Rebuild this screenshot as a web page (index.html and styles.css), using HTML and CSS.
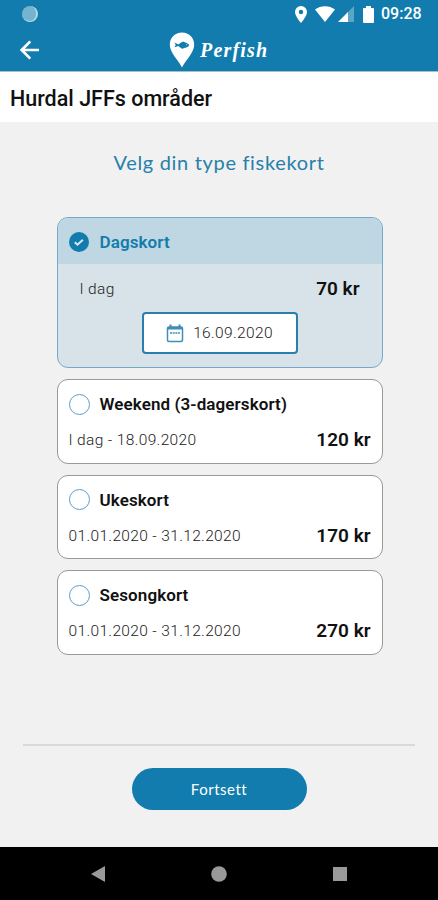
FILE: index.html
```html
<!DOCTYPE html>
<html lang="no">
<head>
    <meta charset="UTF-8">
    <meta name="viewport" content="width=device-width, initial-scale=1.0">
    <title>Perfish</title>
    <link rel="stylesheet" href="styles.css">
</head>
<body>

    <header class="header">
        <div class="status-bar">
            <span class="status-dot"></span>
            <div class="status-icons">
                <svg class="icon-pin" width="12" height="17" viewBox="0 0 12 17">
                    <path fill="#fff" fill-rule="evenodd" d="M6 0a6 6 0 0 0-6 6c0 4.200 6 11 6 11s6-6.800 6-11a6 6 0 0 0-6-6zm0 3.800a2.200 2.200 0 1 1 0 4.400 2.200 2.200 0 0 1 0-4.400z"/>
                </svg>
                <svg class="icon-wifi" width="20" height="16" viewBox="0 0 20 16">
                    <path fill="#fff" d="M0 3.600C5.500-1 14.500-1 20 3.600L10 16z"/>
                </svg>
                <svg class="icon-signal" width="16" height="16" viewBox="0 0 16 16">
                    <path fill="#5ba5c6" d="M16 0v16H9V7z"/>
                    <path fill="#fff" d="M10 6v10H0z"/>
                </svg>
                <svg class="icon-battery" width="11" height="17" viewBox="0 0 11 17">
                    <path fill="#fff" d="M3 0h5v2h2q1 0 1 1v13q0 1-1 1H1q-1 0-1-1V3q0-1 1-1h2z"/>
                </svg>
                <span class="clock">09:28</span>
            </div>
        </div>
        <div class="app-bar">
            <svg class="back" width="20" height="20" viewBox="0 0 20 20" fill="none" stroke="#fff" stroke-width="2.600">
                <path d="M19 10H2M10.300 1.300L1.700 10l8.600 8.700"/>
            </svg>
            <div class="logo">
                <svg width="26" height="36" viewBox="0 0 26 36">
                    <path fill="#fff" d="M13 .5C6 .5.800 5.700.800 12.500.800 21 10 29 13 35.500 16 29 25.200 21 25.200 12.500 25.200 5.700 20 .5 13 .5z"/>
                    <path fill="#117cad" d="M5.500 10.500l4 2c2-2.200 3.500-2.300 5-3l1 .800c2.500.4 4 1.600 4.800 3-1.300 2-3.300 2.700-5.300 2.800l-2 .9-.600-1.100c-1.300-.3-2.300-1-3-1.900l-3.900 1.300 1.200-2.300z"/>
                    <circle cx="17.800" cy="12.700" r=".5" fill="#fff"/>
                </svg>
                <span class="logo-text">Perfish</span>
            </div>
        </div>
    </header>

    <h1 class="page-title">Hurdal JFFs områder</h1>

    <main class="content">
        <h2 class="heading">Velg din type fiskekort</h2>

        <div class="cards">
            <div class="card selected">
                <div class="card-top">
                    <svg class="check" width="20" height="20" viewBox="0 0 20 20">
                        <circle cx="10" cy="10" r="10" fill="#117cad"/>
                        <path d="M5.800 10.200l2.700 2.500 5.400-5" fill="none" stroke="#d5e8f0" stroke-width="2"/>
                    </svg>
                    <span class="card-name">Dagskort</span>
                </div>
                <div class="card-row">
                    <span class="period">I dag</span>
                    <span class="price">70 kr</span>
                </div>
                <button class="date">
                    <svg width="18" height="19" viewBox="0 0 18 19" fill="none" stroke="#3f8db8">
                        <rect x="1.500" y="3" width="15" height="14.500" rx="1.500" stroke-width="1.500"/>
                        <path d="M1.500 4.200h15" stroke-width="2.500"/>
                        <path d="M4.500 .5v3M13.500 .5v3" stroke-width="2"/>
                        <path d="M4 9h10" stroke-width="1.500" stroke-dasharray="2 .7"/>
                    </svg>
                    <span class="date-text">16.09.2020</span>
                </button>
            </div>

            <div class="card">
                <div class="card-top">
                    <span class="radio"></span>
                    <span class="card-name">Weekend (3-dagerskort)</span>
                </div>
                <div class="card-row">
                    <span class="period">I dag - 18.09.2020</span>
                    <span class="price">120 kr</span>
                </div>
            </div>

            <div class="card">
                <div class="card-top">
                    <span class="radio"></span>
                    <span class="card-name">Ukeskort</span>
                </div>
                <div class="card-row">
                    <span class="period">01.01.2020 - 31.12.2020</span>
                    <span class="price">170 kr</span>
                </div>
            </div>

            <div class="card">
                <div class="card-top">
                    <span class="radio"></span>
                    <span class="card-name">Sesongkort</span>
                </div>
                <div class="card-row">
                    <span class="period">01.01.2020 - 31.12.2020</span>
                    <span class="price">270 kr</span>
                </div>
            </div>
        </div>

        <div class="footer">
            <button class="btn">Fortsett</button>
        </div>
    </main>

    <nav class="nav-bar">
        <svg width="14" height="16" viewBox="0 0 14 16"><path fill="#999" d="M14 0v16L0 8z"/></svg>
        <svg width="16" height="16" viewBox="0 0 16 16"><circle cx="8" cy="8" r="7.800" fill="#999"/></svg>
        <svg width="14" height="14" viewBox="0 0 14 14"><rect width="14" height="14" fill="#999"/></svg>
    </nav>

</body>
</html>
```
FILE: styles.css
```css
* {
    box-sizing: border-box;
}

body {
    margin: 0;
    height: 900px;
    display: flex;
    flex-direction: column;
    overflow: hidden;
    background-color: #f1f1f1;
    font-family: Roboto, "Liberation Sans", sans-serif;
    color: #111;
}

svg {
    display: block;
    flex-shrink: 0;
}

button {
    font-family: inherit;
    cursor: pointer;
}

.header {
    height: 72px;
    background-color: #117cad;
    border-bottom: 1px solid #a5bdca;
    color: white;
}

.status-bar {
    height: 28px;
    padding: 0 17px 0 22px;
    display: flex;
    align-items: center;
    justify-content: space-between;
}

.status-dot {
    width: 16px;
    height: 16px;
    border-radius: 50%;
    background-color: #75b3cf;
    border-right: 2px solid #b5d9e7;
    border-bottom: 1px solid #b5d9e7;
}

.status-icons {
    display: flex;
    align-items: center;
}

.icon-wifi {
    margin-left: 8px;
}

.icon-signal {
    margin-left: 3px;
}

.icon-battery {
    margin-left: 9px;
}

.clock {
    width: 40px;
    margin-left: 7px;
    font-size: 16px;
    font-weight: 500;
    line-height: 28px;
}

.app-bar {
    height: 43px;
    display: grid;
    grid-template-columns: 1fr auto 1fr;
    align-items: center;
}

.back {
    margin: 0 0 0 20px;
}

.logo {
    display: flex;
    align-items: center;
    gap: 5px;
}

.logo-text {
    width: 69px;
    padding-top: 2px;
    font-family: "Liberation Serif", serif;
    font-size: 20px;
    font-style: italic;
    font-weight: bold;
    letter-spacing: 1.2px;
    white-space: nowrap;
}

.page-title {
    height: 50px;
    margin: 0;
    padding-left: 10px;
    background-color: white;
    font-size: 21.5px;
    font-weight: 500;
    line-height: 54px;
}

.content {
    flex: 1;
    display: flex;
    flex-direction: column;
    align-items: center;
}

.heading {
    margin: 24px 0 0;
    color: #277faa;
    font-family: Lato, sans-serif;
    font-size: 20px;
    font-weight: 400;
    line-height: 32px;
    letter-spacing: 0.68px;
}

.cards {
    width: 326px;
    margin: 39px 0 0 1px;
    display: flex;
    flex-direction: column;
    gap: 11px;
}

.card {
    height: 84.5px;
    border: 1px solid #999;
    border-radius: 11px;
    background-color: white;
    overflow: hidden;
}

.card-top {
    height: 46px;
    padding: 2px 11px 0;
    display: flex;
    align-items: center;
    gap: 11px;
}

.card-name {
    font-size: 17px;
    font-weight: 600;
    letter-spacing: 0.1px;
}

.radio {
    width: 21px;
    height: 21px;
    margin-right: -1px;
    border: 1px solid #5b9bc9;
    border-radius: 50%;
}

.card-row {
    padding: 3px 11px 0;
    display: flex;
    align-items: center;
    justify-content: space-between;
    line-height: 22px;
}

.period {
    color: #222;
    font-size: 15.5px;
    font-weight: 300;
    letter-spacing: 0.35px;
}

.price {
    font-size: 19px;
    font-weight: 600;
}

.selected {
    height: 151px;
    border-color: #76a9c8;
    background-color: #d7e3e9;
}

.selected .card-top {
    background-color: #bed7e2;
    color: #117cad;
}

.selected .card-row {
    padding: 14px 22px 0;
}

.date {
    width: 156px;
    height: 42px;
    margin: 12px auto 0;
    padding: 0;
    display: flex;
    align-items: center;
    justify-content: center;
    gap: 9px;
    background-color: white;
    border: 2px solid #2b7dac;
    border-radius: 4px;
}

.date-text {
    color: #222;
    font-size: 15.5px;
    font-weight: 300;
    letter-spacing: 0.35px;
}

.footer {
    width: 392px;
    margin-top: auto;
    padding: 22px 0 37px;
    border-top: 2px solid #d9d9d9;
    text-align: center;
}

.btn {
    width: 175px;
    height: 42px;
    border: none;
    border-radius: 21px;
    background-color: #117cad;
    color: white;
    font-family: Lato, sans-serif;
    font-size: 15px;
    letter-spacing: 0.5px;
    display: block;
    margin: 0 auto;
}

.nav-bar {
    height: 53px;
    padding: 0 91px;
    display: flex;
    align-items: center;
    justify-content: space-between;
    background-color: black;
}
```
